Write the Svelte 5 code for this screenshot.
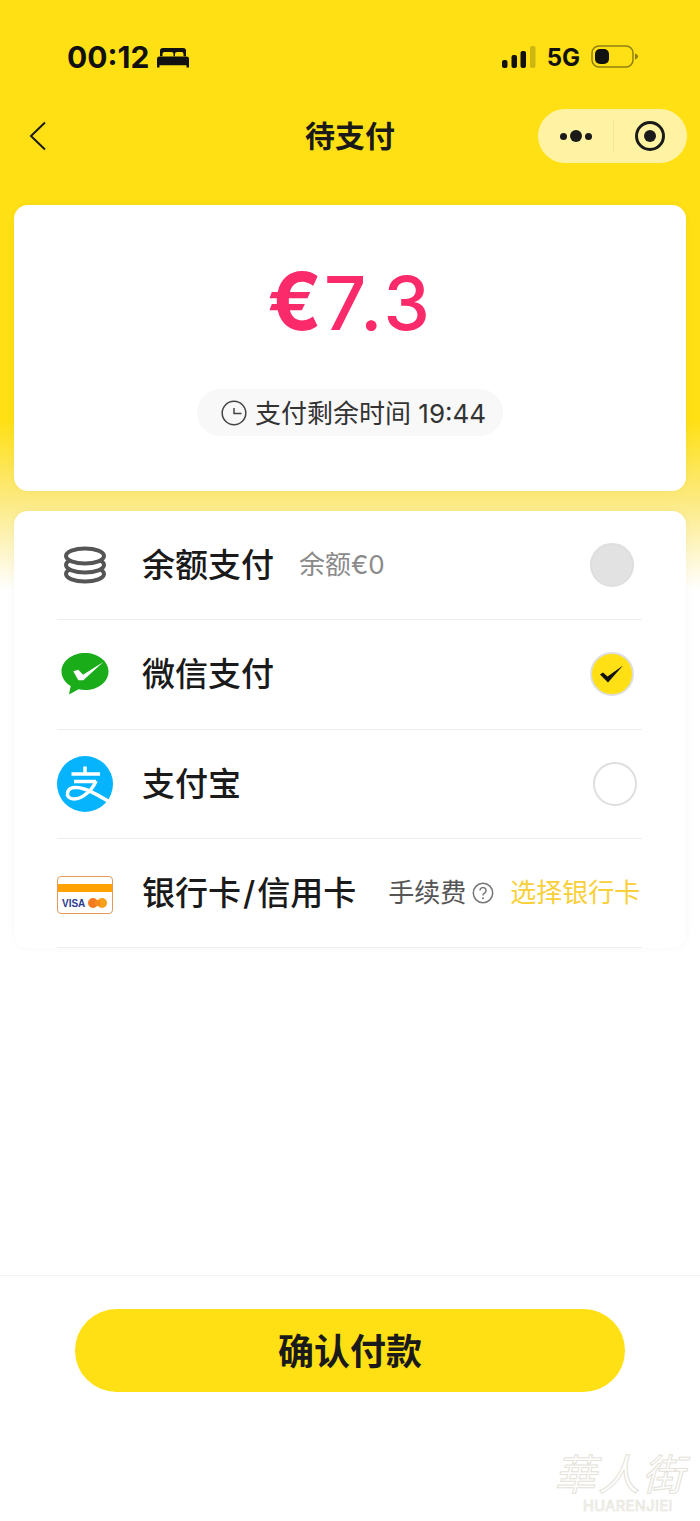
<script>
  const methods = [
    { id: 'balance', label: '余额支付', sub: '余额€0', radio: 'off' },
    { id: 'wechat', label: '微信支付', radio: 'on' },
    { id: 'alipay', label: '支付宝', radio: 'empty' }
  ];
</script>

<div class="page">
  <div class="status">
    <div class="time">
      00:12
      <svg class="bed" width="32" height="21" viewBox="0 0 32 23" preserveAspectRatio="none">
        <path d="M3 10V4a3 3 0 0 1 3-3h20a3 3 0 0 1 3 3v6h-2.500V7.500a2 2 0 0 0-2-2h-4.500a2 2 0 0 0-2 2V10h-1.500V7.500a2 2 0 0 0-2-2H7.500a2 2 0 0 0-2 2V10z" fill="#111" />
        <path d="M2.500 10.500h27A2.500 2.500 0 0 1 32 13v9.500h-2.500V20h-27v2.500H0V13a2.500 2.500 0 0 1 2.500-2.500z" fill="#111" />
      </svg>
    </div>
    <div class="status-right">
      <svg width="34" height="22" viewBox="0 0 34 22">
        <rect x="0" y="14" width="5.500" height="8" rx="2" fill="#111" />
        <rect x="9.500" y="9" width="5.500" height="13" rx="2" fill="#111" />
        <rect x="18.500" y="5" width="5.500" height="17" rx="2" fill="#111" />
        <rect x="28" y="0" width="5.500" height="22" rx="2" fill="#cdb512" />
      </svg>
      <span class="net">5G</span>
      <svg width="48" height="24" viewBox="0 0 48 24">
        <rect x="1" y="1" width="41" height="21" rx="7" fill="none" stroke="#8f7f12" stroke-width="1.500" />
        <rect x="4" y="4" width="14" height="15" rx="5" fill="#111" />
        <path d="M44 8.500c2 .5 3 1.800 3 3s-1 2.500-3 3z" fill="#8f7f12" />
      </svg>
    </div>
  </div>

  <div class="nav">
    <svg class="back" width="18" height="30" viewBox="0 0 18 30">
      <path d="M16 1.500 2 15l14 13.500" fill="none" stroke="#1a1a1a" stroke-width="2" />
    </svg>
    <div class="title">待支付</div>
    <div class="capsule">
      <div class="more">
        <i></i><i class="big"></i><i></i>
      </div>
      <div class="capsule-line"></div>
      <div class="target"><i></i></div>
    </div>
  </div>

  <div class="card amount-card">
    <div class="amount"><b>€</b>7.3</div>
    <div class="timer">
      <svg width="26" height="26" viewBox="0 0 26 26">
        <circle cx="13" cy="13" r="11.800" fill="none" stroke="#444" stroke-width="1.500" />
        <path d="M13 8v5.500h7.500" fill="none" stroke="#444" stroke-width="1.500" />
      </svg>
      <span>支付剩余时间 19:44</span>
    </div>
  </div>

  <div class="card methods">
    {#each methods as m}
      <div class="row">
        <div class="icon">
          {#if m.id === 'balance'}
            <svg width="44" height="38" viewBox="0 0 44 38">
              <g fill="#fff" stroke="#555" stroke-width="4">
                <ellipse cx="22" cy="28" rx="19" ry="7.500" />
                <ellipse cx="22" cy="19" rx="19" ry="7.500" />
                <ellipse cx="22" cy="10" rx="19" ry="7.500" />
              </g>
            </svg>
          {:else if m.id === 'wechat'}
            <svg width="48" height="42" viewBox="0 0 48 42">
              <path d="M24 0C11 0 .5 8.200.5 18.500c0 6 3.600 11.200 9.200 14.600L8 41.500l9.600-5.200c2 .5 4.200.8 6.400.8 13 0 23.500-8.300 23.500-18.600S37 0 24 0z" fill="#1aad19" />
              <path d="M12.300 18.300l5-1.600 4.700 5L42.300 9 22.300 27.300h-5z" fill="#fff" />
            </svg>
          {:else}
            <svg width="56" height="56" viewBox="0 0 56 56">
              <circle cx="28" cy="28" r="28" fill="#06b4fd" />
              <g fill="none" stroke="#fff" stroke-width="3.500">
                <path d="M28 10.500v7.500M14.500 18h28.500M17 25.500h22" />
                <path d="M39 25C36 33 26 43 17 43c-5 0-7-3-6.500-6 .5-4 4.500-6 9.500-5.500 9 .5 19 6.500 31 13.500" />
              </g>
            </svg>
          {/if}
        </div>
        <span class="label">{m.label}</span>
        {#if m.sub}<span class="sub">{m.sub}</span>{/if}
        <div class="radio {m.radio}">
          {#if m.radio === 'on'}
            <svg width="26" height="20" viewBox="0 0 26 20">
              <path d="M1 10.500l3-2 4.500 4L24 1.500 9 18.500z" fill="#111" />
            </svg>
          {/if}
        </div>
      </div>
    {/each}
    <div class="row">
      <div class="icon bank">
        <svg width="56" height="38" viewBox="0 0 56 38">
          <rect x=".5" y=".5" width="55" height="37" rx="3.500" fill="#fff" stroke="#e59a5b" />
          <rect x="1" y="8" width="54" height="8" fill="#ffa200" />
          <text x="5" y="31" font-family="Liberation Sans" font-size="10" font-weight="700" fill="#2b3a8c">VISA</text>
          <circle cx="36" cy="27" r="5" fill="#f47a20" />
          <circle cx="45" cy="27" r="5" fill="#f9a01b" />
          <circle cx="40.500" cy="27" r="3" fill="#f58a1f" />
        </svg>
      </div>
      <span class="label">银行卡<span class="slash">/</span>信用卡</span>
      <span class="fee">手续费</span>
      <svg class="help" width="22" height="22" viewBox="0 0 22 22">
        <circle cx="11" cy="11" r="9.700" fill="none" stroke="#777" stroke-width="1.500" />
        <path d="M8 8.500a3 3 0 1 1 4.500 2.600c-1 .6-1.500 1.100-1.500 2.400" fill="none" stroke="#777" stroke-width="1.500" />
        <circle cx="11" cy="16.200" r="1" fill="#777" />
      </svg>
      <span class="pick">选择银行卡</span>
    </div>
  </div>

  <div class="footer">
    <button class="confirm">确认付款</button>
  </div>

  <div class="watermark">
    <div class="wm-cn">華人街</div>
    <div class="wm-en">HUARENJIEI</div>
  </div>
</div>

<style>
  :global(body) {
    margin: 0;
    background: #fff;
  }
  .page {
    position: relative;
    display: flex;
    flex-direction: column;
    width: 700px;
    height: 1521px;
    overflow: hidden;
    font-family: Inter, 'Noto Sans CJK SC', sans-serif;
    color: #1a1a1a;
    background: linear-gradient(#ffe014 0, #ffe014 420px, #fcea80 500px, #fff 590px);
  }

  .status {
    display: flex;
    justify-content: space-between;
    align-items: center;
    height: 34px;
    margin-top: 40px;
    padding: 0 61px 0 67px;
  }
  .time {
    display: flex;
    align-items: center;
    gap: 8px;
    font-size: 30px;
    font-weight: 700;
    color: #111;
  }
  .status-right {
    display: flex;
    align-items: center;
    gap: 11px;
  }
  .net {
    font-size: 24px;
    font-weight: 700;
    color: #111;
  }

  .nav {
    position: relative;
    display: flex;
    align-items: center;
    justify-content: center;
    height: 54px;
    margin-top: 35px;
  }
  .back {
    position: absolute;
    left: 29px;
    top: 12px;
  }
  .title {
    font-size: 30px;
    font-weight: 700;
    line-height: 54px;
  }
  .capsule {
    position: absolute;
    right: 13px;
    top: 0;
    display: flex;
    align-items: center;
    width: 149px;
    height: 54px;
    border-radius: 27px;
    background: #fff3a3;
  }
  .more {
    display: flex;
    align-items: center;
    justify-content: center;
    gap: 3px;
    width: 75px;
  }
  .more i {
    width: 7px;
    height: 7px;
    border-radius: 50%;
    background: #1a1a1a;
  }
  .more i.big {
    width: 12px;
    height: 12px;
  }
  .capsule-line {
    width: 1px;
    height: 34px;
    background: #f3e7a0;
  }
  .target {
    display: flex;
    align-items: center;
    justify-content: center;
    box-sizing: border-box;
    width: 30px;
    height: 30px;
    margin-left: 21px;
    border: 3px solid #1a1a1a;
    border-radius: 50%;
  }
  .target i {
    width: 12px;
    height: 12px;
    border-radius: 50%;
    background: #1a1a1a;
  }

  .card {
    margin: 0 14px;
    border-radius: 14px;
    background: #fff;
    box-shadow: 0 0 8px rgba(0, 0, 0, 0.04);
  }
  .amount-card {
    display: flex;
    flex-direction: column;
    align-items: center;
    box-sizing: border-box;
    height: 286px;
    margin-top: 42px;
    padding-top: 56px;
  }
  .amount {
    height: 80px;
    font-size: 74px;
    line-height: 80px;
    font-weight: 500;
    letter-spacing: 3px;
    color: #fb2a6b;
  }
  .amount b {
    font-size: 80px;
    font-weight: 700;
    letter-spacing: 2px;
  }
  .timer {
    display: flex;
    align-items: center;
    gap: 8px;
    box-sizing: border-box;
    width: 306px;
    height: 47px;
    margin-top: 48px;
    padding-left: 24px;
    border-radius: 24px;
    background: #f8f8f8;
    font-size: 26px;
    color: #333;
    white-space: nowrap;
  }
  .timer span {
    margin-top: -3px;
  }

  .methods {
    margin-top: 20px;
    padding: 0 44px 0 43px;
  }
  .row {
    display: flex;
    align-items: center;
    box-sizing: border-box;
    height: 109.25px;
    border-bottom: 1px solid #eeeeee;
  }
  .icon {
    display: flex;
    align-items: center;
    justify-content: center;
    flex: none;
    width: 56px;
    margin-right: 29px;
  }
  .icon.bank {
    margin-top: 4px;
  }
  .label {
    margin-top: -4px;
    font-size: 33px;
    font-weight: 500;
    color: #1a1a1a;
    white-space: nowrap;
  }
  .slash {
    padding: 0 2px;
  }
  .sub {
    margin-top: -6px;
    margin-left: 25px;
    font-size: 26px;
    color: #8a8a8a;
  }
  .radio {
    display: flex;
    align-items: center;
    justify-content: center;
    box-sizing: border-box;
    width: 44px;
    height: 44px;
    margin-left: auto;
    border: 2px solid #dedede;
    border-radius: 50%;
  }
  .radio.off {
    margin-right: 8px;
    background: #e2e2e2;
  }
  .radio.on {
    margin-right: 8px;
    background: #ffe014;
  }
  .radio.empty {
    margin-right: 5px;
  }
  .fee {
    margin-top: -4px;
    margin-left: 32px;
    font-size: 26px;
    color: #555;
    white-space: nowrap;
  }
  .help {
    flex: none;
    margin-left: 6px;
  }
  .pick {
    margin-top: -4px;
    margin-left: 16px;
    font-size: 26px;
    color: #f9cf3a;
    white-space: nowrap;
  }

  .footer {
    display: flex;
    justify-content: center;
    margin-top: auto;
    height: 246px;
    box-sizing: border-box;
    padding-top: 33px;
    border-top: 1px solid #f2f2f2;
    background: #fff;
  }
  .confirm {
    width: 550px;
    height: 83px;
    padding: 0 0 4px;
    border: none;
    border-radius: 42px;
    background: #ffe014;
    font-family: inherit;
    font-size: 36px;
    font-weight: 700;
    color: #1a1a1a;
  }

  .watermark {
    position: absolute;
    left: 550px;
    top: 1450px;
    width: 140px;
    text-align: center;
    color: #fff;
  }
  .wm-cn {
    font-size: 42px;
    line-height: 49px;
    letter-spacing: 2px;
    -webkit-text-stroke: 1px #e4e2d8;
    font-style: italic;
  }
  .wm-en {
    padding-left: 16px;
    font-size: 14.500px;
    line-height: 14px;
    letter-spacing: 0.500px;
    -webkit-text-stroke: 0.700px #e4e2d8;
  }
</style>
